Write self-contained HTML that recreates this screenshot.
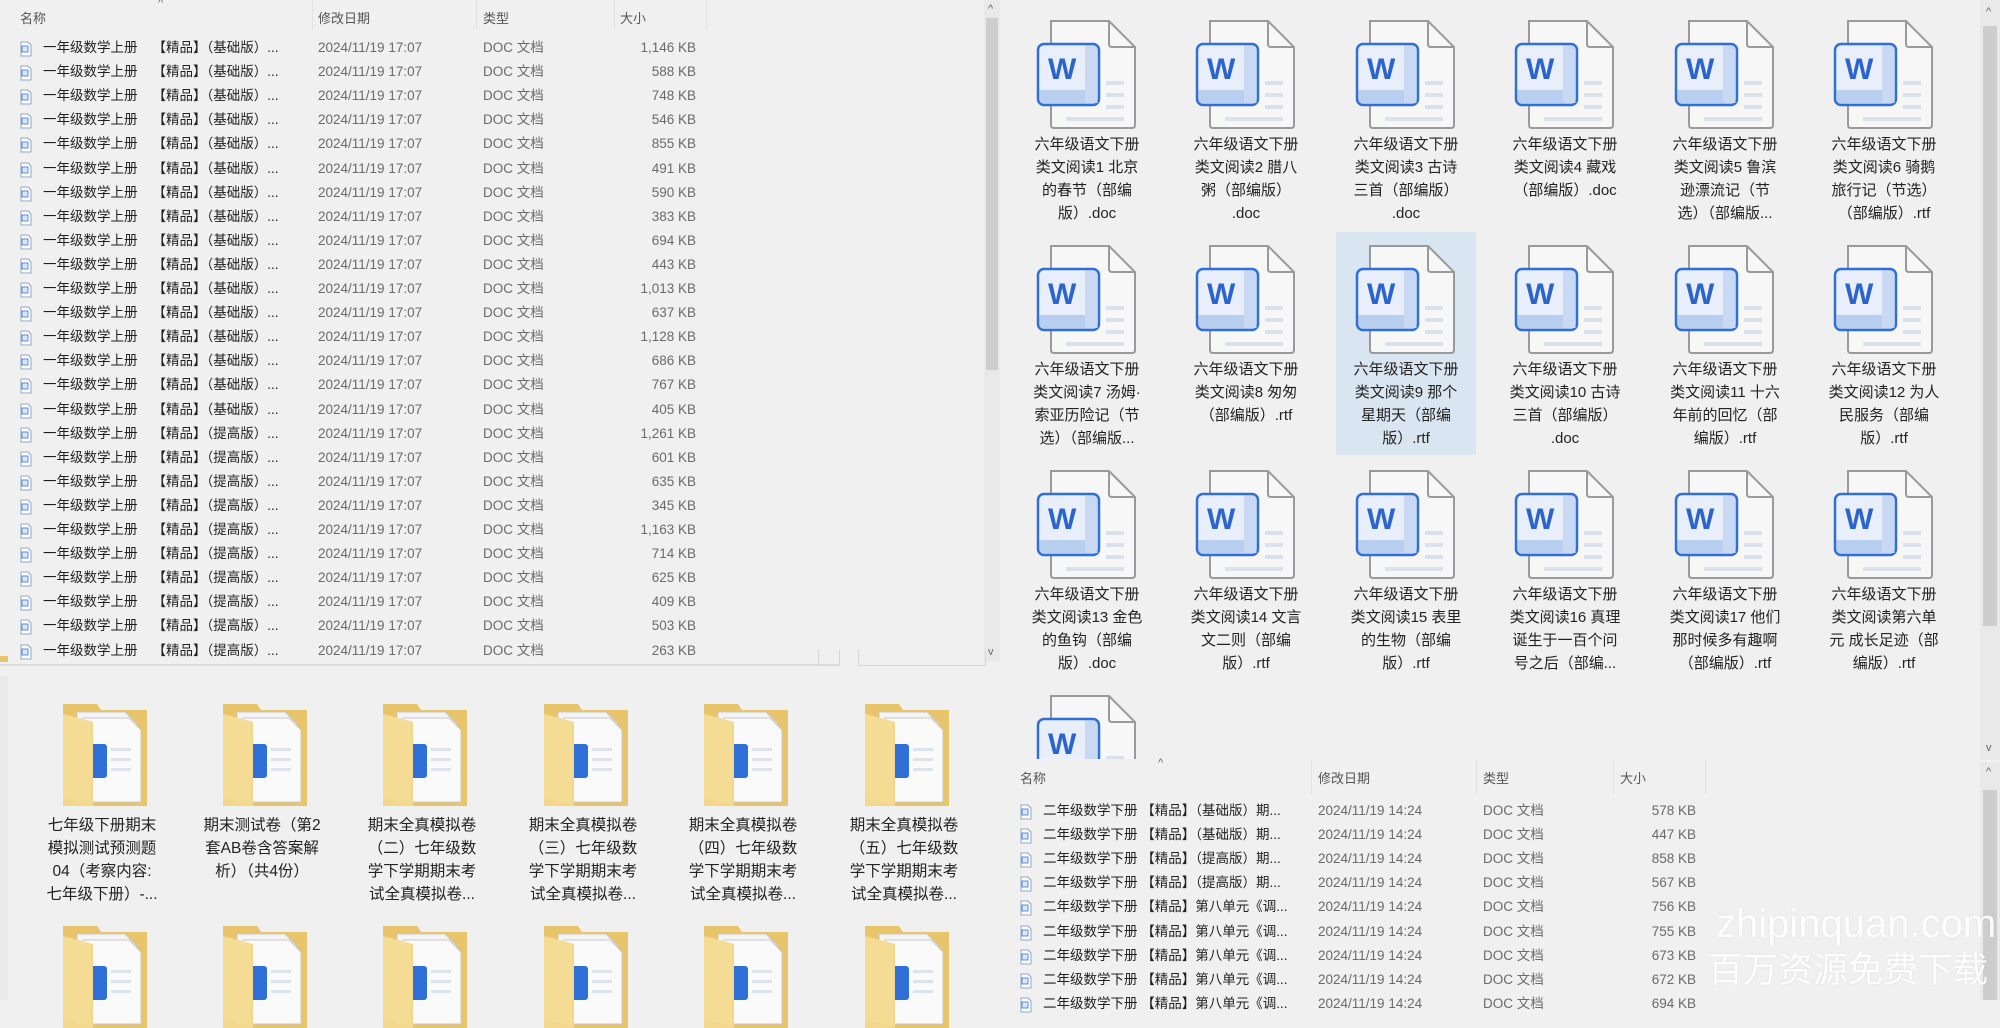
<!DOCTYPE html>
<html><head><meta charset="utf-8"><style>
*{margin:0;padding:0;box-sizing:border-box}
body{width:2000px;height:1000px;overflow:hidden;background:#f0f0f0;font-family:"Liberation Sans","Noto Sans CJK SC",sans-serif;position:relative;color:#1f1f1f}
.a{position:absolute}
.hdr{position:absolute;font-size:13px;color:#555;}
.sep{position:absolute;width:1px;background:#e2e2e2}
.row{position:absolute;height:24.1px;line-height:24.1px;font-size:13.5px;white-space:nowrap}
.row svg{position:absolute;left:0;top:5px}
.row .n{position:absolute;left:23px}
.row .d,.row .t{position:absolute;color:#6a6a6a}
.row .s{position:absolute;color:#6a6a6a;text-align:right;width:100px}
.cell{position:absolute;width:140px;height:216px}
.cell svg{position:absolute;left:19px;top:12px}
.lab{position:absolute;left:0;top:126px;width:140px;text-align:center;font-size:15px;line-height:23px;color:#222}
.fc{position:absolute;width:150px}
.fc svg{position:absolute;left:36px;top:0}
.fl{position:absolute;top:114px;left:0;width:150px;text-align:center;font-size:15.5px;line-height:23px;color:#222}
.sb{position:absolute;background:#e9e9e9}
.th{position:absolute;background:#cdcdcd}
.ar{position:absolute;font-size:11px;color:#666}
</style></head><body>
<svg width="0" height="0" style="position:absolute">
<defs>
<symbol id="doc" viewBox="0 0 100 112">
<path d="M15 2H73L99 28V106Q99 109 96 109H18Q15 109 15 106Z" fill="#f7f7f7" stroke="#9a9a9a" stroke-width="2"/>
<path d="M73 2V25Q73 28 76 28H99" fill="none" stroke="#9a9a9a" stroke-width="2"/>
<rect x="70" y="62" width="18" height="4" fill="#dbe1ea"/><rect x="70" y="74" width="18" height="4" fill="#dbe1ea"/><rect x="70" y="86" width="18" height="4" fill="#dbe1ea"/><rect x="30" y="98" width="58" height="4" fill="#dbe1ea"/>
<rect x="2" y="25" width="61" height="61" rx="6" fill="#e8effb" stroke="#2f6fd8" stroke-width="2.5"/>
<path d="M3.5 71H61.5V80Q61.5 84.5 57 84.5H8Q3.5 84.5 3.5 80Z" fill="#b9cff0"/>
<path d="M49 26.5H56Q61.5 26.5 61.5 32V84H49Z" fill="#c9d9f3"/>
<text x="12" y="60" font-family="Liberation Sans" font-weight="bold" font-size="30" fill="#2a64cc">W</text>
</symbol>
<symbol id="sd" viewBox="0 0 12 16">
<path d="M1 1H8L11 4V15H1Z" fill="#fff" stroke="#8fa6c8"/><rect x="2" y="5" width="6" height="6" fill="#dbe7fa" stroke="#3a73d6" stroke-width=".8"/>
</symbol>
<symbol id="fo" viewBox="0 0 84 106">
<path d="M0 4H34L38 10H84V106H0Z" fill="#e8c56b"/>
<path d="M14 12H62L74 24V98H14Z" fill="#f4f4f4" stroke="#c8c8c8"/>
<path d="M20 18H66L78 30V102H20Z" fill="#fafafa" stroke="#c8c8c8"/>
<rect x="26" y="44" width="18" height="34" rx="3" fill="#2f6fd8"/>
<rect x="48" y="48" width="20" height="3" fill="#dde3ea"/><rect x="48" y="58" width="20" height="3" fill="#dde3ea"/><rect x="48" y="68" width="20" height="3" fill="#dde3ea"/>
<path d="M0 14L30 22V106H0Z" fill="#f2d78c"/>
<path d="M0 14L28 22V104L0 98Z" fill="#f5dc94"/>
</symbol>
</defs></svg>

<!-- LEFT TOP LIST -->
<div class="hdr" style="left:20px;top:8px">名称</div>
<div class="ar" style="left:158px;top:-3px">^</div>
<div class="hdr" style="left:318px;top:8px">修改日期</div>
<div class="hdr" style="left:483px;top:8px">类型</div>
<div class="hdr" style="left:620px;top:8px">大小</div>
<div class="sep" style="left:312px;top:0;height:30px"></div>
<div class="sep" style="left:476px;top:0;height:30px"></div>
<div class="sep" style="left:614px;top:0;height:30px"></div>
<div class="sep" style="left:706px;top:0;height:30px"></div>

<div class="a" style="left:20px;top:36px;width:700px">
<div class="row" style="top:0"><svg width="12" height="16"><use href="#sd"/></svg><span class="n">一年级数学上册&nbsp;&nbsp;&nbsp;&nbsp;【精品】（基础版）...</span><span class="d" style="left:298px">2024/11/19 17:07</span><span class="t" style="left:463px">DOC 文档</span><span class="s" style="left:576px">1,146 KB</span></div>
<div class="row" style="top:24.1px"><svg width="12" height="16"><use href="#sd"/></svg><span class="n">一年级数学上册&nbsp;&nbsp;&nbsp;&nbsp;【精品】（基础版）...</span><span class="d" style="left:298px">2024/11/19 17:07</span><span class="t" style="left:463px">DOC 文档</span><span class="s" style="left:576px">588 KB</span></div>
<div class="row" style="top:48.2px"><svg width="12" height="16"><use href="#sd"/></svg><span class="n">一年级数学上册&nbsp;&nbsp;&nbsp;&nbsp;【精品】（基础版）...</span><span class="d" style="left:298px">2024/11/19 17:07</span><span class="t" style="left:463px">DOC 文档</span><span class="s" style="left:576px">748 KB</span></div>
<div class="row" style="top:72.3px"><svg width="12" height="16"><use href="#sd"/></svg><span class="n">一年级数学上册&nbsp;&nbsp;&nbsp;&nbsp;【精品】（基础版）...</span><span class="d" style="left:298px">2024/11/19 17:07</span><span class="t" style="left:463px">DOC 文档</span><span class="s" style="left:576px">546 KB</span></div>
<div class="row" style="top:96.4px"><svg width="12" height="16"><use href="#sd"/></svg><span class="n">一年级数学上册&nbsp;&nbsp;&nbsp;&nbsp;【精品】（基础版）...</span><span class="d" style="left:298px">2024/11/19 17:07</span><span class="t" style="left:463px">DOC 文档</span><span class="s" style="left:576px">855 KB</span></div>
<div class="row" style="top:120.5px"><svg width="12" height="16"><use href="#sd"/></svg><span class="n">一年级数学上册&nbsp;&nbsp;&nbsp;&nbsp;【精品】（基础版）...</span><span class="d" style="left:298px">2024/11/19 17:07</span><span class="t" style="left:463px">DOC 文档</span><span class="s" style="left:576px">491 KB</span></div>
<div class="row" style="top:144.6px"><svg width="12" height="16"><use href="#sd"/></svg><span class="n">一年级数学上册&nbsp;&nbsp;&nbsp;&nbsp;【精品】（基础版）...</span><span class="d" style="left:298px">2024/11/19 17:07</span><span class="t" style="left:463px">DOC 文档</span><span class="s" style="left:576px">590 KB</span></div>
<div class="row" style="top:168.7px"><svg width="12" height="16"><use href="#sd"/></svg><span class="n">一年级数学上册&nbsp;&nbsp;&nbsp;&nbsp;【精品】（基础版）...</span><span class="d" style="left:298px">2024/11/19 17:07</span><span class="t" style="left:463px">DOC 文档</span><span class="s" style="left:576px">383 KB</span></div>
<div class="row" style="top:192.8px"><svg width="12" height="16"><use href="#sd"/></svg><span class="n">一年级数学上册&nbsp;&nbsp;&nbsp;&nbsp;【精品】（基础版）...</span><span class="d" style="left:298px">2024/11/19 17:07</span><span class="t" style="left:463px">DOC 文档</span><span class="s" style="left:576px">694 KB</span></div>
<div class="row" style="top:216.9px"><svg width="12" height="16"><use href="#sd"/></svg><span class="n">一年级数学上册&nbsp;&nbsp;&nbsp;&nbsp;【精品】（基础版）...</span><span class="d" style="left:298px">2024/11/19 17:07</span><span class="t" style="left:463px">DOC 文档</span><span class="s" style="left:576px">443 KB</span></div>
<div class="row" style="top:241px"><svg width="12" height="16"><use href="#sd"/></svg><span class="n">一年级数学上册&nbsp;&nbsp;&nbsp;&nbsp;【精品】（基础版）...</span><span class="d" style="left:298px">2024/11/19 17:07</span><span class="t" style="left:463px">DOC 文档</span><span class="s" style="left:576px">1,013 KB</span></div>
<div class="row" style="top:265.1px"><svg width="12" height="16"><use href="#sd"/></svg><span class="n">一年级数学上册&nbsp;&nbsp;&nbsp;&nbsp;【精品】（基础版）...</span><span class="d" style="left:298px">2024/11/19 17:07</span><span class="t" style="left:463px">DOC 文档</span><span class="s" style="left:576px">637 KB</span></div>
<div class="row" style="top:289.2px"><svg width="12" height="16"><use href="#sd"/></svg><span class="n">一年级数学上册&nbsp;&nbsp;&nbsp;&nbsp;【精品】（基础版）...</span><span class="d" style="left:298px">2024/11/19 17:07</span><span class="t" style="left:463px">DOC 文档</span><span class="s" style="left:576px">1,128 KB</span></div>
<div class="row" style="top:313.3px"><svg width="12" height="16"><use href="#sd"/></svg><span class="n">一年级数学上册&nbsp;&nbsp;&nbsp;&nbsp;【精品】（基础版）...</span><span class="d" style="left:298px">2024/11/19 17:07</span><span class="t" style="left:463px">DOC 文档</span><span class="s" style="left:576px">686 KB</span></div>
<div class="row" style="top:337.4px"><svg width="12" height="16"><use href="#sd"/></svg><span class="n">一年级数学上册&nbsp;&nbsp;&nbsp;&nbsp;【精品】（基础版）...</span><span class="d" style="left:298px">2024/11/19 17:07</span><span class="t" style="left:463px">DOC 文档</span><span class="s" style="left:576px">767 KB</span></div>
<div class="row" style="top:361.5px"><svg width="12" height="16"><use href="#sd"/></svg><span class="n">一年级数学上册&nbsp;&nbsp;&nbsp;&nbsp;【精品】（基础版）...</span><span class="d" style="left:298px">2024/11/19 17:07</span><span class="t" style="left:463px">DOC 文档</span><span class="s" style="left:576px">405 KB</span></div>
<div class="row" style="top:385.6px"><svg width="12" height="16"><use href="#sd"/></svg><span class="n">一年级数学上册&nbsp;&nbsp;&nbsp;&nbsp;【精品】（提高版）...</span><span class="d" style="left:298px">2024/11/19 17:07</span><span class="t" style="left:463px">DOC 文档</span><span class="s" style="left:576px">1,261 KB</span></div>
<div class="row" style="top:409.7px"><svg width="12" height="16"><use href="#sd"/></svg><span class="n">一年级数学上册&nbsp;&nbsp;&nbsp;&nbsp;【精品】（提高版）...</span><span class="d" style="left:298px">2024/11/19 17:07</span><span class="t" style="left:463px">DOC 文档</span><span class="s" style="left:576px">601 KB</span></div>
<div class="row" style="top:433.8px"><svg width="12" height="16"><use href="#sd"/></svg><span class="n">一年级数学上册&nbsp;&nbsp;&nbsp;&nbsp;【精品】（提高版）...</span><span class="d" style="left:298px">2024/11/19 17:07</span><span class="t" style="left:463px">DOC 文档</span><span class="s" style="left:576px">635 KB</span></div>
<div class="row" style="top:457.9px"><svg width="12" height="16"><use href="#sd"/></svg><span class="n">一年级数学上册&nbsp;&nbsp;&nbsp;&nbsp;【精品】（提高版）...</span><span class="d" style="left:298px">2024/11/19 17:07</span><span class="t" style="left:463px">DOC 文档</span><span class="s" style="left:576px">345 KB</span></div>
<div class="row" style="top:482px"><svg width="12" height="16"><use href="#sd"/></svg><span class="n">一年级数学上册&nbsp;&nbsp;&nbsp;&nbsp;【精品】（提高版）...</span><span class="d" style="left:298px">2024/11/19 17:07</span><span class="t" style="left:463px">DOC 文档</span><span class="s" style="left:576px">1,163 KB</span></div>
<div class="row" style="top:506.1px"><svg width="12" height="16"><use href="#sd"/></svg><span class="n">一年级数学上册&nbsp;&nbsp;&nbsp;&nbsp;【精品】（提高版）...</span><span class="d" style="left:298px">2024/11/19 17:07</span><span class="t" style="left:463px">DOC 文档</span><span class="s" style="left:576px">714 KB</span></div>
<div class="row" style="top:530.2px"><svg width="12" height="16"><use href="#sd"/></svg><span class="n">一年级数学上册&nbsp;&nbsp;&nbsp;&nbsp;【精品】（提高版）...</span><span class="d" style="left:298px">2024/11/19 17:07</span><span class="t" style="left:463px">DOC 文档</span><span class="s" style="left:576px">625 KB</span></div>
<div class="row" style="top:554.3px"><svg width="12" height="16"><use href="#sd"/></svg><span class="n">一年级数学上册&nbsp;&nbsp;&nbsp;&nbsp;【精品】（提高版）...</span><span class="d" style="left:298px">2024/11/19 17:07</span><span class="t" style="left:463px">DOC 文档</span><span class="s" style="left:576px">409 KB</span></div>
<div class="row" style="top:578.4px"><svg width="12" height="16"><use href="#sd"/></svg><span class="n">一年级数学上册&nbsp;&nbsp;&nbsp;&nbsp;【精品】（提高版）...</span><span class="d" style="left:298px">2024/11/19 17:07</span><span class="t" style="left:463px">DOC 文档</span><span class="s" style="left:576px">503 KB</span></div>
<div class="row" style="top:602.5px"><svg width="12" height="16"><use href="#sd"/></svg><span class="n">一年级数学上册&nbsp;&nbsp;&nbsp;&nbsp;【精品】（提高版）...</span><span class="d" style="left:298px">2024/11/19 17:07</span><span class="t" style="left:463px">DOC 文档</span><span class="s" style="left:576px">263 KB</span></div>
</div>
<div class="sb" style="left:984px;top:0;width:16px;height:662px"></div>
<div class="th" style="left:986px;top:18px;width:12px;height:352px"></div>
<div class="ar" style="left:988px;top:3px">^</div>
<div class="ar" style="left:988px;top:646px">v</div>
<div class="a" style="left:0;top:664px;width:840px;height:2px;background:#dcdcdc"></div>
<div class="a" style="left:0;top:656px;width:8px;height:6px;background:#e8c56b"></div>
<div class="a" style="left:818px;top:650px;width:22px;height:16px;border:1px solid #d6d6d6;border-top:none"></div>
<div class="a" style="left:858px;top:650px;width:128px;height:16px;border:1px solid #d6d6d6;border-top:none"></div>
<div class="sb" style="left:0;top:676px;width:8px;height:324px"></div>

<!-- LEFT BOTTOM FOLDERS -->
<div class="fc" style="left:27px;top:700px"><svg width="84" height="106"><use href="#fo"/></svg><div class="fl">七年级下册期末<br>模拟测试预测题<br>04（考察内容:<br>七年级下册）-...</div></div>
<div class="fc" style="left:187px;top:700px"><svg width="84" height="106"><use href="#fo"/></svg><div class="fl">期末测试卷（第2<br>套AB卷含答案解<br>析）（共4份）</div></div>
<div class="fc" style="left:347px;top:700px"><svg width="84" height="106"><use href="#fo"/></svg><div class="fl">期末全真模拟卷<br>（二）七年级数<br>学下学期期末考<br>试全真模拟卷...</div></div>
<div class="fc" style="left:508px;top:700px"><svg width="84" height="106"><use href="#fo"/></svg><div class="fl">期末全真模拟卷<br>（三）七年级数<br>学下学期期末考<br>试全真模拟卷...</div></div>
<div class="fc" style="left:668px;top:700px"><svg width="84" height="106"><use href="#fo"/></svg><div class="fl">期末全真模拟卷<br>（四）七年级数<br>学下学期期末考<br>试全真模拟卷...</div></div>
<div class="fc" style="left:829px;top:700px"><svg width="84" height="106"><use href="#fo"/></svg><div class="fl">期末全真模拟卷<br>（五）七年级数<br>学下学期期末考<br>试全真模拟卷...</div></div>
<div class="fc" style="left:27px;top:922px"><svg width="84" height="106"><use href="#fo"/></svg></div>
<div class="fc" style="left:187px;top:922px"><svg width="84" height="106"><use href="#fo"/></svg></div>
<div class="fc" style="left:347px;top:922px"><svg width="84" height="106"><use href="#fo"/></svg></div>
<div class="fc" style="left:508px;top:922px"><svg width="84" height="106"><use href="#fo"/></svg></div>
<div class="fc" style="left:668px;top:922px"><svg width="84" height="106"><use href="#fo"/></svg></div>
<div class="fc" style="left:829px;top:922px"><svg width="84" height="106"><use href="#fo"/></svg></div>

<!-- RIGHT TOP GRID -->
<div class="a" style="left:1000px;top:0;width:1000px;height:759px;overflow:hidden">
<div class="a" style="left:336px;top:232px;width:140px;height:223px;background:#d9e5f0"></div>
<div class="cell" style="left:17px;top:7px"><svg width="100" height="112"><use href="#doc"/></svg><div class="lab">六年级语文下册<br>类文阅读1 北京<br>的春节（部编<br>版）.doc</div></div>
<div class="cell" style="left:176px;top:7px"><svg width="100" height="112"><use href="#doc"/></svg><div class="lab">六年级语文下册<br>类文阅读2 腊八<br>粥（部编版）<br>.doc</div></div>
<div class="cell" style="left:336px;top:7px"><svg width="100" height="112"><use href="#doc"/></svg><div class="lab">六年级语文下册<br>类文阅读3 古诗<br>三首（部编版）<br>.doc</div></div>
<div class="cell" style="left:495px;top:7px"><svg width="100" height="112"><use href="#doc"/></svg><div class="lab">六年级语文下册<br>类文阅读4 藏戏<br>（部编版）.doc</div></div>
<div class="cell" style="left:655px;top:7px"><svg width="100" height="112"><use href="#doc"/></svg><div class="lab">六年级语文下册<br>类文阅读5 鲁滨<br>逊漂流记（节<br>选）（部编版...</div></div>
<div class="cell" style="left:814px;top:7px"><svg width="100" height="112"><use href="#doc"/></svg><div class="lab">六年级语文下册<br>类文阅读6 骑鹅<br>旅行记（节选）<br>（部编版）.rtf</div></div>

<div class="cell" style="left:17px;top:232px"><svg width="100" height="112"><use href="#doc"/></svg><div class="lab">六年级语文下册<br>类文阅读7 汤姆·<br>索亚历险记（节<br>选）（部编版...</div></div>
<div class="cell" style="left:176px;top:232px"><svg width="100" height="112"><use href="#doc"/></svg><div class="lab">六年级语文下册<br>类文阅读8 匆匆<br>（部编版）.rtf</div></div>
<div class="cell" style="left:336px;top:232px"><svg width="100" height="112"><use href="#doc"/></svg><div class="lab">六年级语文下册<br>类文阅读9 那个<br>星期天（部编<br>版）.rtf</div></div>
<div class="cell" style="left:495px;top:232px"><svg width="100" height="112"><use href="#doc"/></svg><div class="lab">六年级语文下册<br>类文阅读10 古诗<br>三首（部编版）<br>.doc</div></div>
<div class="cell" style="left:655px;top:232px"><svg width="100" height="112"><use href="#doc"/></svg><div class="lab">六年级语文下册<br>类文阅读11 十六<br>年前的回忆（部<br>编版）.rtf</div></div>
<div class="cell" style="left:814px;top:232px"><svg width="100" height="112"><use href="#doc"/></svg><div class="lab">六年级语文下册<br>类文阅读12 为人<br>民服务（部编<br>版）.rtf</div></div>

<div class="cell" style="left:17px;top:457px"><svg width="100" height="112"><use href="#doc"/></svg><div class="lab">六年级语文下册<br>类文阅读13 金色<br>的鱼钩（部编<br>版）.doc</div></div>
<div class="cell" style="left:176px;top:457px"><svg width="100" height="112"><use href="#doc"/></svg><div class="lab">六年级语文下册<br>类文阅读14 文言<br>文二则（部编<br>版）.rtf</div></div>
<div class="cell" style="left:336px;top:457px"><svg width="100" height="112"><use href="#doc"/></svg><div class="lab">六年级语文下册<br>类文阅读15 表里<br>的生物（部编<br>版）.rtf</div></div>
<div class="cell" style="left:495px;top:457px"><svg width="100" height="112"><use href="#doc"/></svg><div class="lab">六年级语文下册<br>类文阅读16 真理<br>诞生于一百个问<br>号之后（部编...</div></div>
<div class="cell" style="left:655px;top:457px"><svg width="100" height="112"><use href="#doc"/></svg><div class="lab">六年级语文下册<br>类文阅读17 他们<br>那时候多有趣啊<br>（部编版）.rtf</div></div>
<div class="cell" style="left:814px;top:457px"><svg width="100" height="112"><use href="#doc"/></svg><div class="lab">六年级语文下册<br>类文阅读第六单<br>元 成长足迹（部<br>编版）.rtf</div></div>
<div class="cell" style="left:17px;top:682px"><svg width="100" height="112"><use href="#doc"/></svg></div>
</div>
<div class="sb" style="left:1980px;top:0;width:20px;height:760px"></div>
<div class="th" style="left:1983px;top:26px;width:14px;height:600px"></div>
<div class="ar" style="left:1986px;top:6px">^</div>
<div class="ar" style="left:1986px;top:742px">v</div>

<!-- RIGHT BOTTOM LIST -->
<div class="hdr" style="left:1020px;top:768px">名称</div>
<div class="ar" style="left:1158px;top:757px">^</div>
<div class="hdr" style="left:1318px;top:768px">修改日期</div>
<div class="hdr" style="left:1483px;top:768px">类型</div>
<div class="hdr" style="left:1620px;top:768px">大小</div>
<div class="sep" style="left:1311px;top:760px;height:34px"></div>
<div class="sep" style="left:1476px;top:760px;height:34px"></div>
<div class="sep" style="left:1613px;top:760px;height:34px"></div>
<div class="sep" style="left:1705px;top:760px;height:34px"></div>
<div class="a" style="left:1020px;top:799px;width:700px">
<div class="row" style="top:0"><svg width="12" height="16"><use href="#sd"/></svg><span class="n">二年级数学下册&nbsp;【精品】（基础版）期...</span><span class="d" style="left:298px">2024/11/19 14:24</span><span class="t" style="left:463px">DOC 文档</span><span class="s" style="left:576px">578 KB</span></div>
<div class="row" style="top:24.1px"><svg width="12" height="16"><use href="#sd"/></svg><span class="n">二年级数学下册&nbsp;【精品】（基础版）期...</span><span class="d" style="left:298px">2024/11/19 14:24</span><span class="t" style="left:463px">DOC 文档</span><span class="s" style="left:576px">447 KB</span></div>
<div class="row" style="top:48.2px"><svg width="12" height="16"><use href="#sd"/></svg><span class="n">二年级数学下册&nbsp;【精品】（提高版）期...</span><span class="d" style="left:298px">2024/11/19 14:24</span><span class="t" style="left:463px">DOC 文档</span><span class="s" style="left:576px">858 KB</span></div>
<div class="row" style="top:72.3px"><svg width="12" height="16"><use href="#sd"/></svg><span class="n">二年级数学下册&nbsp;【精品】（提高版）期...</span><span class="d" style="left:298px">2024/11/19 14:24</span><span class="t" style="left:463px">DOC 文档</span><span class="s" style="left:576px">567 KB</span></div>
<div class="row" style="top:96.4px"><svg width="12" height="16"><use href="#sd"/></svg><span class="n">二年级数学下册&nbsp;【精品】第八单元《调...</span><span class="d" style="left:298px">2024/11/19 14:24</span><span class="t" style="left:463px">DOC 文档</span><span class="s" style="left:576px">756 KB</span></div>
<div class="row" style="top:120.5px"><svg width="12" height="16"><use href="#sd"/></svg><span class="n">二年级数学下册&nbsp;【精品】第八单元《调...</span><span class="d" style="left:298px">2024/11/19 14:24</span><span class="t" style="left:463px">DOC 文档</span><span class="s" style="left:576px">755 KB</span></div>
<div class="row" style="top:144.6px"><svg width="12" height="16"><use href="#sd"/></svg><span class="n">二年级数学下册&nbsp;【精品】第八单元《调...</span><span class="d" style="left:298px">2024/11/19 14:24</span><span class="t" style="left:463px">DOC 文档</span><span class="s" style="left:576px">673 KB</span></div>
<div class="row" style="top:168.7px"><svg width="12" height="16"><use href="#sd"/></svg><span class="n">二年级数学下册&nbsp;【精品】第八单元《调...</span><span class="d" style="left:298px">2024/11/19 14:24</span><span class="t" style="left:463px">DOC 文档</span><span class="s" style="left:576px">672 KB</span></div>
<div class="row" style="top:192.8px"><svg width="12" height="16"><use href="#sd"/></svg><span class="n">二年级数学下册&nbsp;【精品】第八单元《调...</span><span class="d" style="left:298px">2024/11/19 14:24</span><span class="t" style="left:463px">DOC 文档</span><span class="s" style="left:576px">694 KB</span></div>
</div>
<div class="sb" style="left:1980px;top:762px;width:20px;height:238px"></div>
<div class="th" style="left:1983px;top:790px;width:14px;height:210px"></div>
<div class="ar" style="left:1986px;top:766px">^</div>

<!-- WATERMARK -->
<div class="a" style="left:1716px;top:902px;font-size:40px;line-height:44px;color:rgba(255,255,255,.92);font-family:'Liberation Sans',sans-serif;text-shadow:0 0 2px rgba(0,0,0,.08)">zhipinquan.com</div>
<div class="a" style="left:1708px;top:950px;font-size:35px;line-height:42px;color:rgba(255,255,255,.92);font-family:'Liberation Sans','Noto Sans CJK SC',sans-serif;text-shadow:0 0 2px rgba(0,0,0,.08)">百万资源免费下载</div>
</body></html>
